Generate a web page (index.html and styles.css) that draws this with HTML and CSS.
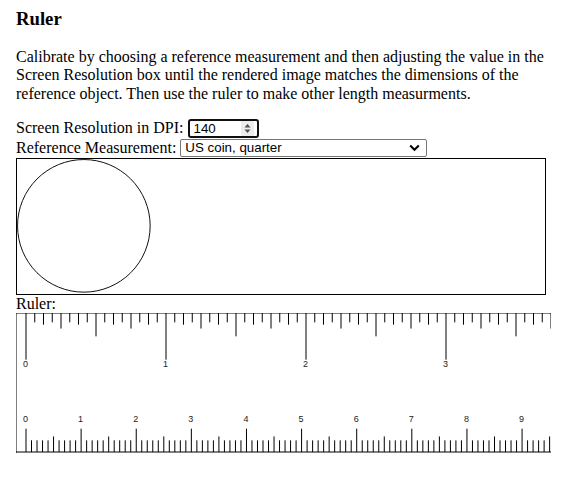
FILE: index.html
```html
<!DOCTYPE html>
<html lang="en">
<head>
<meta charset="utf-8">
<title>Ruler</title>
<link rel="stylesheet" href="styles.css">
</head>
<body>
<div class="page">
  <h3 class="title">Ruler</h3>
  <p class="intro">Calibrate by choosing a reference measurement and then adjusting the value in the Screen Resolution box until the rendered image matches the dimensions of the reference object. Then use the ruler to make other length measurments.</p>
  <div class="row row-dpi">
    <label class="field-label" for="dpi">Screen Resolution in DPI:</label>
    <span class="num-field"><input id="dpi" class="num-input" type="text" value="140"><span class="spin"><svg width="13" height="15" viewBox="0 0 13 15"><path d="M3.5 6.5 L6.5 3 L9.5 6.5 Z" fill="#505050"/><path d="M3.5 8.5 L9.5 8.5 L6.5 12 Z" fill="#505050"/></svg></span></span>
  </div>
  <div class="row row-ref">
    <label class="field-label" for="ref">Reference Measurement:</label>
    <span class="select-wrap"><select id="ref" class="ref-select"><option>US coin, quarter</option><option>US coin, penny</option><option>Credit card</option></select><svg class="chevron" width="11" height="8" viewBox="0 0 11 8"><polyline points="1.2,1.5 5.5,5.8 9.8,1.5" fill="none" stroke="#000" stroke-width="2"/></svg></span>
  </div>
  <div class="coin-box">
    <svg class="coin-svg" width="528" height="135" viewBox="0 0 528 135"><circle cx="66.85" cy="66.85" r="66.3" fill="none" stroke="#111" stroke-width="1"/></svg>
  </div>
  <div class="ruler-label">Ruler:</div>
  <svg class="ruler-svg" width="535" height="140" viewBox="0 0 535 140">
    <g class="ticks"></g>
    <g class="labels">
      <text x="9.5" y="54">0</text>
      <text x="149.5" y="54">1</text>
      <text x="289.5" y="54">2</text>
      <text x="429.5" y="54">3</text>
      <text x="9.5" y="108.8">0</text>
      <text x="64.62" y="108.8">1</text>
      <text x="119.74" y="108.8">2</text>
      <text x="174.85" y="108.8">3</text>
      <text x="229.97" y="108.8">4</text>
      <text x="285.09" y="108.8">5</text>
      <text x="340.21" y="108.8">6</text>
      <text x="395.33" y="108.8">7</text>
      <text x="450.44" y="108.8">8</text>
      <text x="505.56" y="108.8">9</text>
    </g>
  </svg>
</div>
<script src="script.js"></script>
</body>
</html>
```

FILE: styles.css
```css
html, body {
  margin: 0;
  padding: 0;
  background: #fff;
}

body {
  font-family: "Liberation Serif", "Times New Roman", serif;
  font-size: 16px;
  color: #000;
}

.page {
  padding: 8px 16px;
}

.title {
  margin: 0 0 18px;
  font-size: 18.72px;
  line-height: 22px;
  font-weight: bold;
}

.intro {
  margin: 0 0 16px;
  line-height: 18.33px;
}

.row {
  line-height: 17px;
  white-space: nowrap;
}

.row-dpi {
  height: 20px;
}

.row-ref {
  height: 19px;
}

.num-field {
  display: inline-flex;
  align-items: center;
  vertical-align: top;
  box-sizing: border-box;
  width: 71px;
  height: 19px;
  border: 2px solid #101010;
  border-radius: 3px;
  background: #fff;
}

.num-input {
  flex: 1;
  min-width: 0;
  border: none;
  outline: none;
  padding: 0 0 0 4px;
  margin: 0;
  height: 15px;
  font-family: "Liberation Sans", Arial, sans-serif;
  font-size: 13.33px;
  color: #000;
  background: transparent;
}

.spin {
  display: flex;
  width: 13px;
  height: 15px;
  margin-right: 3px;
  background: #ececec;
}

.spin svg {
  display: block;
}

.select-wrap {
  position: relative;
  display: inline-block;
  vertical-align: top;
}

.ref-select {
  appearance: none;
  -webkit-appearance: none;
  display: block;
  box-sizing: border-box;
  width: 247px;
  height: 18px;
  margin: 0;
  padding: 0 0 0 4px;
  border: 1px solid #767676;
  border-radius: 2px;
  background: #fff;
  font-family: "Liberation Sans", Arial, sans-serif;
  font-size: 13.33px;
  color: #000;
}

.chevron {
  position: absolute;
  right: 7px;
  top: 5px;
  pointer-events: none;
}

.coin-box {
  width: 528px;
  height: 135px;
  border: 1px solid #000;
}

.coin-svg {
  display: block;
}

.ruler-label {
  height: 18px;
  line-height: 18px;
}

.ruler-svg {
  display: block;
}

.ruler-svg line {
  stroke: #000;
  stroke-width: 1;
}

.ruler-svg text {
  font-family: "Liberation Sans", Arial, sans-serif;
  font-size: 9px;
  fill: #222;
  text-anchor: middle;
}
```

FILE: script.js
```js
(function () {
  var NS = "http://www.w3.org/2000/svg";
  var svg = document.querySelector(".ruler-svg");
  var g = svg.querySelector(".ticks");
  var W = 535, H = 140, dpi = 140, x0 = 10;

  function line(x1, y1, x2, y2) {
    var l = document.createElementNS(NS, "line");
    l.setAttribute("x1", x1);
    l.setAttribute("y1", y1);
    l.setAttribute("x2", x2);
    l.setAttribute("y2", y2);
    g.appendChild(l);
  }

  // frame: top edge, left edge, bottom edge
  line(0, 0, W, 0);
  line(0, 0, 0, H);
  line(0, H - 1, W, H - 1);

  // inch scale (sixteenths) hanging from the top
  var step = dpi / 16;
  for (var k = 0; x0 + k * step <= W; k++) {
    var x = x0 + k * step;
    var len;
    if (k % 16 === 0) len = H / 3;
    else if (k % 8 === 0) len = H / 6;
    else if (k % 4 === 0) len = H / 9;
    else if (k % 2 === 0) len = H / 12;
    else len = H / 15;
    line(x, 0, x, len);
  }

  // centimetre scale (millimetres) standing on the bottom
  var mm = dpi / 25.4;
  for (var m = 0; x0 + m * mm <= W; m++) {
    var xm = x0 + m * mm;
    var lm;
    if (m % 10 === 0) lm = H / 6;
    else if (m % 5 === 0) lm = H / 9;
    else lm = H / 12;
    line(xm, H - 1, xm, H - 1 - lm);
  }
})();
```
